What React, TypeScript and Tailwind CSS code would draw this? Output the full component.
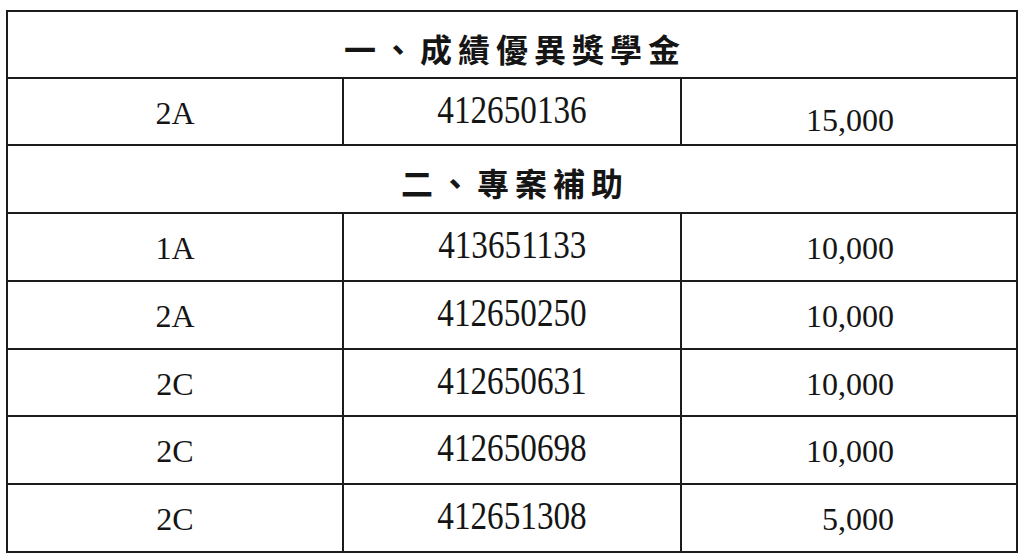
const rows: Array<
  | { kind: "head"; title: string; h: string }
  | { kind: "data"; cls: string; id: string; amount: string; h: string; amtPad?: string }
> = [
  { kind: "head", title: "一、成績優異獎學金", h: "h-[65px]" },
  { kind: "data", cls: "2A", id: "412650136", amount: "15,000", h: "h-[67px]", amtPad: "pt-[16px]" },
  { kind: "head", title: "二、專案補助", h: "h-[68px]" },
  { kind: "data", cls: "1A", id: "413651133", amount: "10,000", h: "h-[68px]" },
  { kind: "data", cls: "2A", id: "412650250", amount: "10,000", h: "h-[68px]" },
  { kind: "data", cls: "2C", id: "412650631", amount: "10,000", h: "h-[67px]" },
  { kind: "data", cls: "2C", id: "412650698", amount: "10,000", h: "h-[68px]" },
  { kind: "data", cls: "2C", id: "412651308", amount: "5,000", h: "h-[68px]" },
];

const serif = "font-['Liberation_Serif','Times_New_Roman',serif]";

export default function App() {
  return (
    <div className="h-[558px] w-[1024px] bg-white pl-[6px] pt-[10px] text-[#151515]">
      <div className="box-content w-[1008px] border-2 border-[#1c1c1c]">
        {rows.map((r, i) =>
          r.kind === "head" ? (
            <div
              key={i}
              className={`${r.h} box-border flex items-center justify-center pl-[6px] pt-[6px] font-['Noto_Sans_CJK_TC','Noto_Sans_CJK_SC',sans-serif] text-[32px] font-bold tracking-[6px] ${i > 0 ? "border-t-2 border-[#1c1c1c]" : ""}`}
            >
              {r.title}
            </div>
          ) : (
            <div
              key={i}
              className={`${r.h} box-border grid grid-cols-[334px_338px_1fr] border-t-2 border-[#1c1c1c] ${serif}`}
            >
              <div className="flex items-center justify-center pt-[2px] text-[32px] leading-none">{r.cls}</div>
              <div className="flex items-center justify-center border-l-2 border-[#1c1c1c] pb-[4px] text-[40px] leading-none">
                <span className="inline-block scale-x-[0.83]">{r.id}</span>
              </div>
              <div className={`flex items-center justify-end border-l-2 border-[#1c1c1c] pr-[122px] text-[32px] leading-none ${r.amtPad ?? "pt-[2px]"}`}>
                {r.amount}
              </div>
            </div>
          )
        )}
      </div>
    </div>
  );
}
